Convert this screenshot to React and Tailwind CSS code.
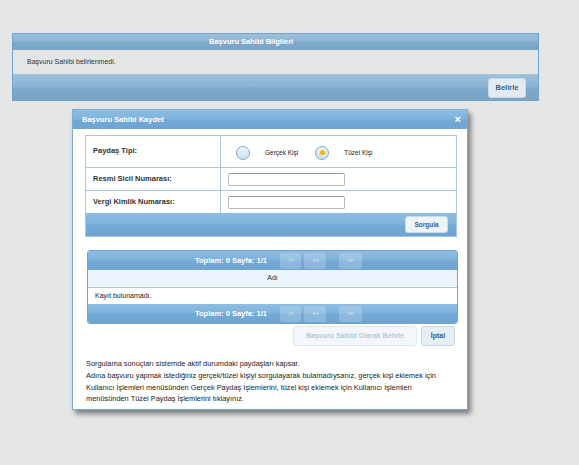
import { useState } from 'react'

const font = { fontFamily: '"Liberation Sans", Arial, sans-serif' }

const bar =
  'bg-[linear-gradient(180deg,#9cc0dc_0%,#8db4d3_45%,#7ea8c9_55%,#7aa5c7_100%)]'
const dlgBar =
  'bg-[linear-gradient(180deg,#8cbde3_0%,#80b3dc_45%,#72a8d6_55%,#6fa4d3_100%)]'

function PagerBtn({ children, w }) {
  return (
    <span
      className={`flex h-[16px] items-center justify-center rounded-[3px] bg-white/20 text-[6px] text-white/40 ${w}`}
    >
      {children}
    </span>
  )
}

function Pager() {
  return (
    <div className={`flex h-[19px] items-center ${dlgBar}`}>
      <span className="ml-[107px] w-[76px] text-[7.5px] font-bold text-white">
        Toplam: 0 Sayfa: 1/1
      </span>
      <div className="ml-[9px] flex items-center gap-[3px]">
        <PagerBtn w="w-[21px]">|◂</PagerBtn>
        <PagerBtn w="w-[22px]">◂◂</PagerBtn>
      </div>
      <div className="ml-[13px]">
        <PagerBtn w="w-[23px]">▸▸</PagerBtn>
      </div>
    </div>
  )
}

function Radio({ checked }) {
  return (
    <span className="flex h-[14px] w-[14px] items-center justify-center rounded-full border border-[#7fa7c9] bg-[linear-gradient(180deg,#eef5fb,#cfe0f0)]">
      {checked && <span className="h-[5px] w-[5px] rounded-full bg-[#f5b800]" />}
    </span>
  )
}

export default function App() {
  const [tip, setTip] = useState('tuzel')

  return (
    <div className="h-[465px] w-[579px] overflow-hidden bg-[#e6e6e6] pt-[33px]" style={font}>
      <div className="ml-[12px] w-[527px] border border-[#6fa3d0]">
        <div className={`flex h-[16px] items-center pl-[196px] ${bar}`}>
          <span className="text-[7.5px] font-bold text-white">Başvuru Sahibi Bilgileri</span>
        </div>
        <div className="flex h-[25px] items-center border-b border-[#a9c6df] bg-[#e4e6e6] pl-[14px] text-[7px] text-[#333]">
          Başvuru Sahibi belirlenmedi.
        </div>
        <div className={`flex h-[25px] items-center justify-end pr-[12px] ${bar}`}>
          <button className="h-[20px] w-[38px] rounded-[3px] border border-[#c9d9e8] bg-[#e3ebf2] text-[7.5px] font-bold text-[#3d5f80]">
            Belirle
          </button>
        </div>
      </div>

      <div className="ml-[72px] mt-[8px] w-[396px] border border-[#79acd6] bg-white shadow-[3px_4px_5px_rgba(0,0,0,0.45)]">
        <div className={`flex h-[19px] items-center justify-between pl-[9px] pr-[6px] ${dlgBar}`}>
          <span className="text-[7.5px] font-bold text-white">Başvuru Sahibi Kaydet</span>
          <span className="text-[11px] font-bold leading-none text-white">×</span>
        </div>

        <div className="pl-[12px] pr-[9px] pt-[6px]">
          <div className="w-[372px] border border-[#a7c6e2]">
            <div className="grid grid-cols-[135px_1fr] text-[7.5px]">
              <div className="flex h-[32px] items-center border-b border-r border-[#a7c6e2] pb-[2px] pl-[7px] font-bold text-[#333]">
                Paydaş Tipi:
              </div>
              <div className="flex h-[32px] items-center border-b border-[#a7c6e2] pl-[15px] pt-[2px]">
                <button onClick={() => setTip('gercek')}>
                  <Radio checked={tip === 'gercek'} />
                </button>
                <span className="ml-[15px] text-[6.5px] text-[#222]">Gerçek Kişi</span>
                <button className="ml-[17px]" onClick={() => setTip('tuzel')}>
                  <Radio checked={tip === 'tuzel'} />
                </button>
                <span className="ml-[15px] text-[6.5px] text-[#222]">Tüzel Kişi</span>
              </div>
              <div className="flex h-[23px] items-center border-b border-r border-[#a7c6e2] pl-[7px] font-bold text-[#333]">
                Resmi Sicil Numarası:
              </div>
              <div className="flex h-[23px] items-center border-b border-[#a7c6e2] pl-[7px]">
                <input className="h-[13px] w-[117px] rounded-[2px] border border-[#b9b9b9] border-t-[#999] bg-white" />
              </div>
              <div className="flex h-[22px] items-center border-r border-[#a7c6e2] pl-[7px] font-bold text-[#333]">
                Vergi Kimlik Numarası:
              </div>
              <div className="flex h-[22px] items-center pl-[7px]">
                <input className="h-[13px] w-[117px] rounded-[2px] border border-[#b9b9b9] border-t-[#999] bg-white" />
              </div>
            </div>
            <div className={`flex h-[23px] items-center justify-end pr-[8px] ${dlgBar}`}>
              <button className="h-[17px] w-[43px] rounded-[3px] border border-[#c9dcee] bg-[#eef4fa] text-[6.5px] font-bold text-[#3d5f80]">
                Sorgula
              </button>
            </div>
          </div>

          <div className="ml-[2px] mt-[13px] w-[371px] overflow-hidden rounded-[3px] border border-[#6fa4d3]">
            <Pager />
            <div className="flex h-[18px] items-center justify-center border-b border-[#a7c6e2] bg-[#ebf4fd] text-[7px] text-[#234]">
              Adı
            </div>
            <div className="flex h-[16px] items-center bg-white pl-[7px] text-[7px] text-[#222]">
              Kayıt bulunamadı.
            </div>
            <Pager />
          </div>

          <div className="mt-[2px] flex justify-end gap-[4px] pr-[3px]">
            <button className="h-[20px] w-[124px] rounded-[3px] border border-[#dde8f2] bg-[#f3f7fb] text-[7px] font-bold text-[#b8c8d6]">
              Başvuru Sahibi Olarak Belirle
            </button>
            <button className="h-[20px] w-[34px] rounded-[3px] border border-[#c5d6e6] bg-[#e6eef6] text-[7px] font-bold text-[#3d5f80]">
              İptal
            </button>
          </div>

          <div className="mt-[12px] whitespace-nowrap pb-[5px] pl-[1px] text-[7.4px] leading-[11.3px] text-[#222]">
            <p className="mb-[1px]">Sorgulama sonuçları sistemde aktif durumdaki paydaşları kapsar.</p>
            <p>
              Adına başvuru yapmak istediğiniz gerçek/tüzel kişiyi sorgulayarak bulamadıysanız, gerçek kişi eklemek için
              <br />
              Kullanıcı İşlemleri menüsünden Gerçek Paydaş İşlemlerini, tüzel kişi eklemek için Kullanıcı İşlemleri
              <br />
              menüsünden Tüzel Paydaş İşlemlerini tıklayınız.
            </p>
          </div>
        </div>
      </div>
    </div>
  )
}
